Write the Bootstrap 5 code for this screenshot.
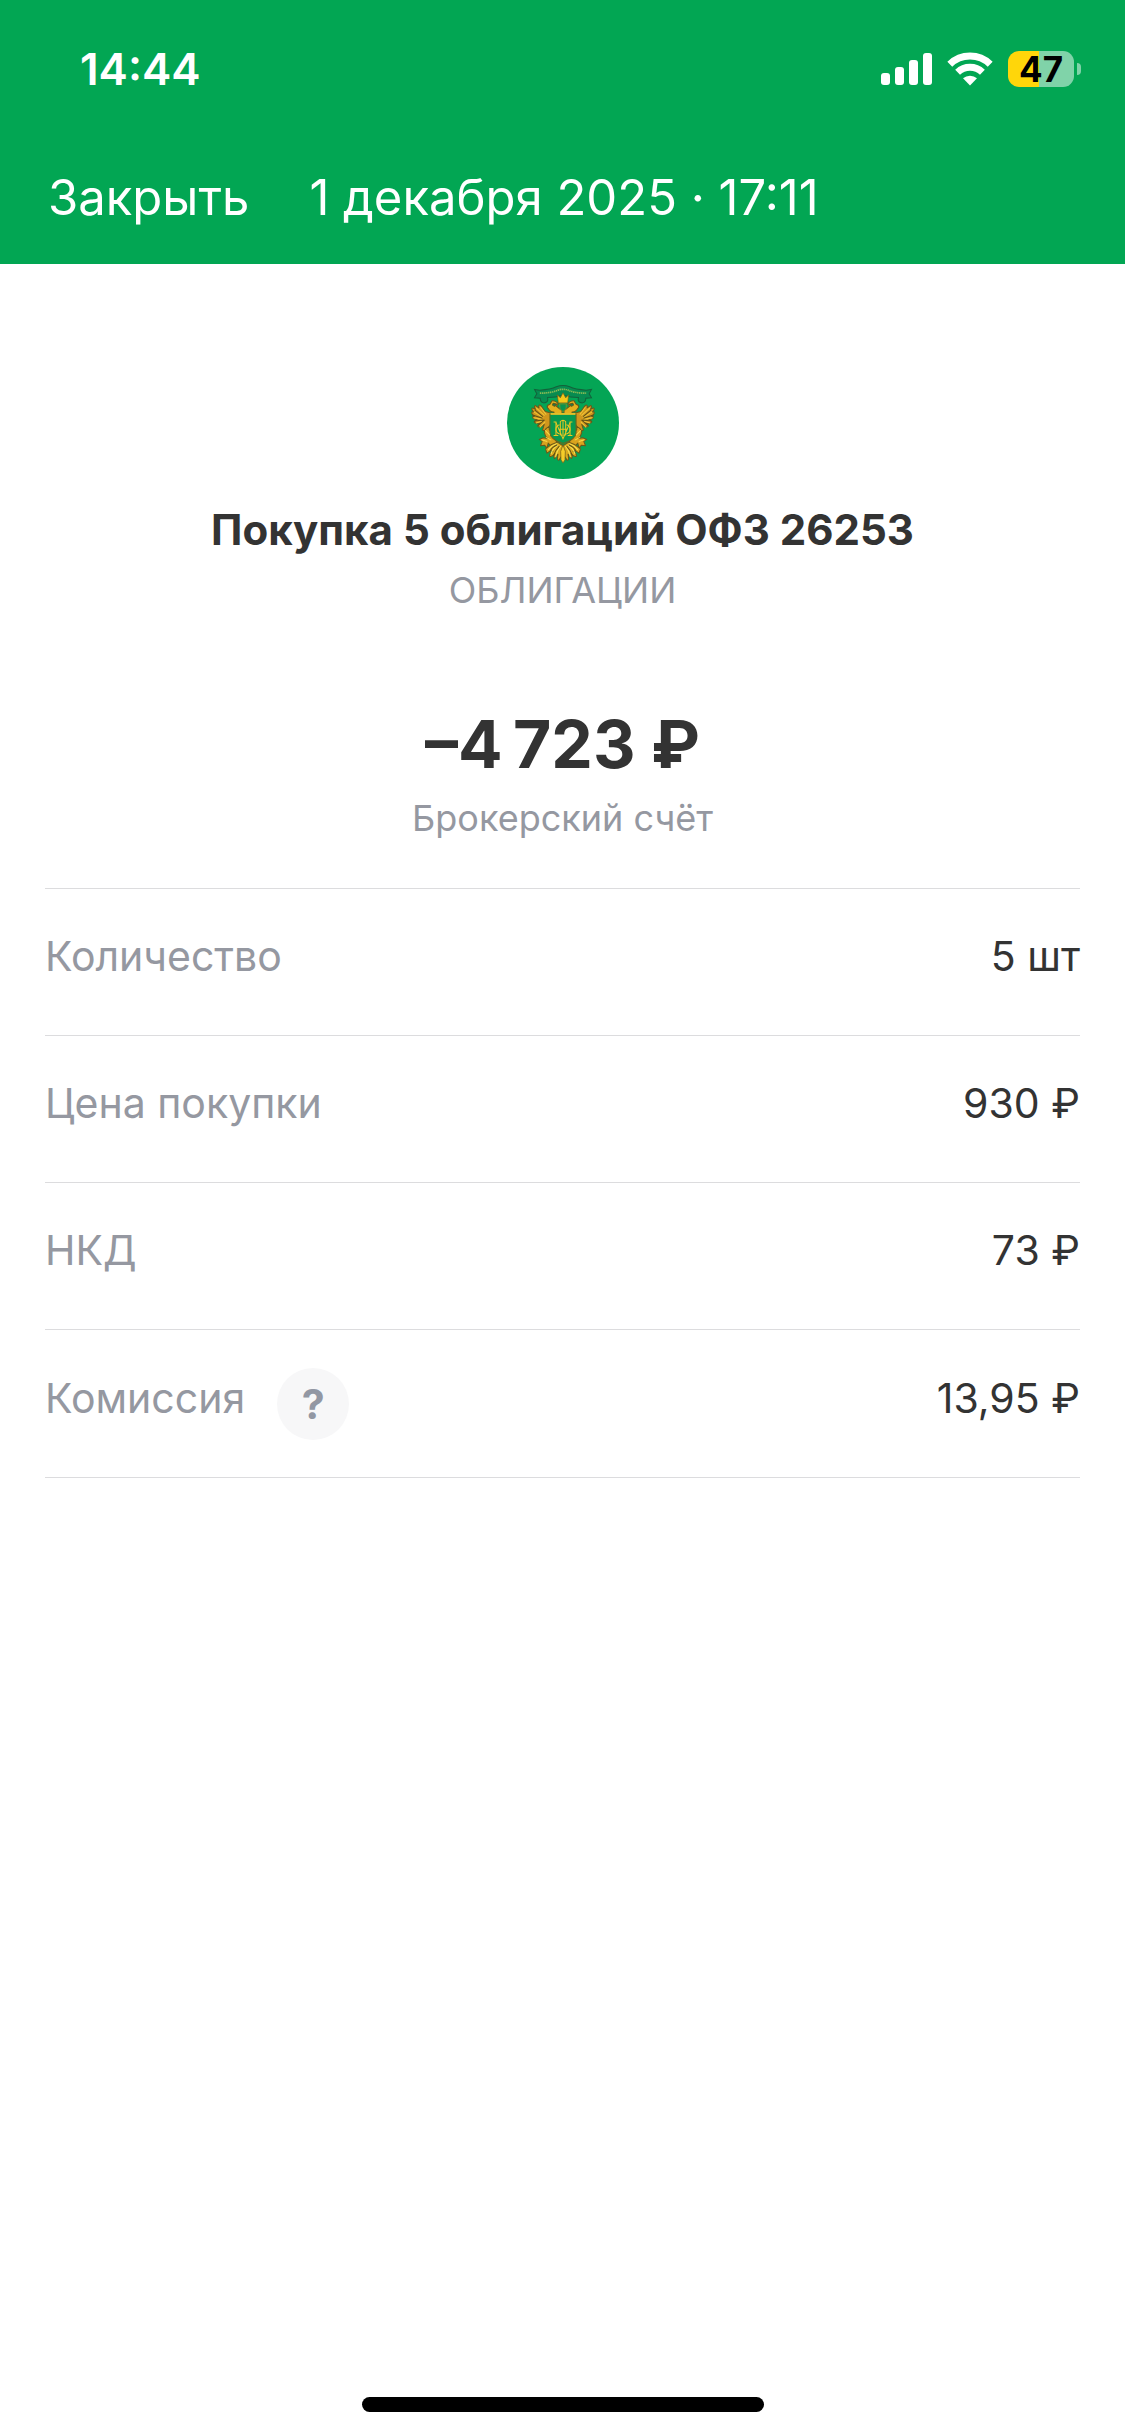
<!DOCTYPE html>
<html lang="ru">
<head>
  <meta charset="UTF-8" />
  <meta name="viewport" content="width=device-width, initial-scale=1" />
  <title>Операция</title>
  <link href="https://cdn.jsdelivr.net/npm/bootstrap@5.3.3/dist/css/bootstrap.min.css" rel="stylesheet">
  <style>
    body {
      font-family: Inter, "Liberation Sans", sans-serif;
      color: #333;
      background: #fff;
    }
    .app-header { background: #02a653; }
    .status-bar {
      padding: 42px 44px 0 80px;
      height: 136px;
    }
    .status-time {
      font-size: 44px;
      line-height: 54px;
      font-weight: 600;
    }
    .status-icons { height: 54px; gap: 15px; }
    .battery-level {
      width: 66px;
      height: 36px;
      border-radius: 11px;
      background: linear-gradient(90deg, #ffd60a 47%, #80d3a9 47%);
      color: #000;
      font-size: 35px;
      line-height: 36px;
      font-weight: 700;
    }
    .battery-tip {
      width: 4px;
      height: 12px;
      margin-left: 3px;
      border-radius: 0 6px 6px 0;
      background: #80d3a9;
    }
    .title-bar {
      gap: 60px;
      height: 128px;
      padding: 0 48px 4px;
      font-size: 49px;
      line-height: 60px;
    }
    .btn-close-text {
      font-size: 49px;
      line-height: 60px;
      color: #fff;
    }
    .deal { padding: 103px 45px 0; }
    .deal-name {
      font-size: 42px;
      line-height: 52px;
      font-weight: 700;
      margin-top: 25px;
    }
    .deal-note {
      font-size: 36px;
      line-height: 44px;
      margin-top: 12px;
      color: #9598a1;
    }
    .deal-sum {
      font-size: 66px;
      line-height: 80px;
      font-weight: 700;
      margin-top: 92px;
    }
    .deal-rows { padding: 48px 45px 0; }
    .deal-row {
      height: 147px;
      padding: 0 0 12px;
      font-size: 41px;
      line-height: 52px;
      border-top: 1px solid #dcdcde;
    }
    .deal-row:last-child {
      height: 149px;
      border-bottom: 1px solid #dcdcde;
    }
    .deal-row dt { color: #9598a1; gap: 32px; }
    .btn-help {
      width: 72px;
      height: 72px;
      margin-top: 12px;
      background: #f7f7f8;
      color: #9297a3;
      font-size: 41px;
      line-height: 72px;
      font-weight: 700;
    }
    .home-bar {
      width: 402px;
      height: 15px;
      margin-bottom: 24px;
    }
  </style>
</head>
<body class="d-flex flex-column min-vh-100">

  <header class="app-header text-white">
    <div class="status-bar d-flex justify-content-between align-items-start">
      <div class="status-time">14:44</div>
      <div class="status-icons d-flex align-items-center">
        <svg width="51" height="32" viewBox="0 0 51 32" fill="#fff" aria-hidden="true">
          <rect x="0" y="20" width="9" height="12" rx="3"/>
          <rect x="14" y="14" width="9" height="18" rx="3"/>
          <rect x="28" y="7" width="9" height="25" rx="3"/>
          <rect x="42" y="0" width="9" height="32" rx="3"/>
        </svg>
        <svg width="46" height="34" viewBox="0 0 46 34" aria-hidden="true">
          <g fill="none" stroke="#fff" stroke-width="7">
            <path d="M2.8 12.2a29 29 0 0 1 40.4 0"/>
            <path d="M10.6 20.2a18 18 0 0 1 24.8 0"/>
          </g>
          <path d="M23 33.5l-7-7.2a10.5 10.5 0 0 1 14 0z" fill="#fff"/>
        </svg>
        <div class="d-flex align-items-center">
          <div class="battery-level text-center">47</div>
          <div class="battery-tip"></div>
        </div>
      </div>
    </div>
    <div class="title-bar d-flex align-items-center">
      <button type="button" class="btn-close-text btn p-0 border-0">Закрыть</button>
      <div>1 декабря 2025 · 17:11</div>
    </div>
  </header>

  <main class="flex-grow-1">
    <section class="deal d-flex flex-column align-items-center text-center">
      <svg width="112" height="112" viewBox="52 50 334 334" aria-hidden="true">
        <circle cx="219" cy="217" r="167" fill="#04a555"/>
        <!-- ribbon -->
        <path d="M134 117l16 2q33-2 49-10 20-7 40 0 16 8 49 10l16-2-7 13 7 12-17 1q0 12-10 14-16 0-12-16-25 0-46-7-21 7-46 7 4 16-12 16-10-2-10-14l-17-1 7-12z" fill="#078c50" stroke="#14613a" stroke-width="3"/>
        <path d="M150 128q34 0 54-9 15-5 30 0 20 9 54 9" fill="none" stroke="#8dbb55" stroke-width="5" stroke-dasharray="4 2"/>
        <!-- crown -->
        <path d="M202 133l9 9 8-15 8 15 9-9-3 24h-28z" fill="#f2c81b" stroke="#715c17" stroke-width="2"/>
        <!-- wings, left one mirrored to the right -->
        <g id="wing" stroke="#69571a" stroke-width="3" stroke-linejoin="round">
          <path d="M192 184q-12 1-17-10l-3-4q-1-7 8-9l6-10q13-1 19 10l-6 6q8 7 17 13v9h-24z" fill="#e5b01d"/>
          <path d="M190 158l12 3-8 6q-10-2-4-9z" fill="#17804a"/>
          <path d="M194 190l-28-7-13-18q-8-5-6 7l-10-7q-6 1 0 11l-9-4q-5 3 3 12l-5 0q-2 7 8 12l-6 3q2 8 14 8l-9 6q4 8 18 3l-8 10q7 8 20-5l-5 17 9 4 12-17 9-14z" fill="#d0961d"/>
          <path d="M139 172l25 23M132 184l28 17M131 201l27 5M138 217l22-6M150 230l16-17M152 170l17 22" fill="none" stroke="#f0c636"/>
          <path d="M135 178l24 20M128 193l30 10M134 211l27-3M144 225l20-17" fill="none" stroke="#5f5017"/>
          <path d="M178 228q-13 4-15 17 3 13 10 18l-13-2-12 5 9 6-5 13 12-2 7 9 4-15 10 12 17-14-13-14-2-18-9-6z" fill="#d9a31e"/>
          <path d="M166 239l14 14M168 260l16 8M155 267l17 5" fill="none" stroke="#f9db4b"/>
          <path d="M218 284l-16-10-19 8-16 12 4 13q12-10 18-6-10 4-10 15 9 3 16-9-6 11-1 16l10-13-2 14q4 9 8-1l8-12z" fill="#dcac1d"/>
          <path d="M212 286q-12 14-15 33M205 282q-16 9-22 28M201 279q-15 4-26 18" fill="none" stroke="#fae255"/>
          <path d="M208 286q-12 12-17 28M202 282q-15 6-22 19" fill="none" stroke="#5f5017"/>
        </g>
        <use href="#wing" transform="matrix(-1 0 0 1 438 0)"/>
        <path d="M219 282l-7 20 1 25 6 9 6-9 1-25z" fill="#f5cd29" stroke="#69571a" stroke-width="2"/>
        <!-- shield -->
        <path d="M180 190h78v56q0 19-39 32-39-13-39-32z" fill="#08994f" stroke="#6d651d" stroke-width="3"/>
        <path d="M182 190h74" stroke="#f2cc2b" stroke-width="5"/>
        <path d="M209 160h20l-1 15-9 8-9-8z" fill="#0a934e" stroke="#9e8c22" stroke-width="2"/>
        <!-- monogram -->
        <g fill="none" stroke="#edc722" stroke-width="3">
          <path d="M191 214h7v40m-7 0h14M247 214h-7v40m7 0h-14"/>
          <path d="M198 216l21 48 21-48M211 254v-41q8-8 16 0v41M219 208v48M205 236h28"/>
          <path d="M209 222q-11 3-11 14t11 14M229 222q11 3 11 14t-11 14"/>
        </g>
      </svg>
      <h1 class="deal-name mb-0">Покупка 5 облигаций ОФЗ 26253</h1>
      <div class="deal-note">ОБЛИГАЦИИ</div>
      <div class="deal-sum">–4&thinsp;723 ₽</div>
      <div class="deal-note">Брокерский счёт</div>
    </section>

    <dl class="deal-rows mb-0">
      <div class="deal-row d-flex justify-content-between align-items-center">
        <dt class="fw-normal">Количество</dt>
        <dd class="mb-0">5 шт</dd>
      </div>
      <div class="deal-row d-flex justify-content-between align-items-center">
        <dt class="fw-normal">Цена покупки</dt>
        <dd class="mb-0">930 ₽</dd>
      </div>
      <div class="deal-row d-flex justify-content-between align-items-center">
        <dt class="fw-normal">НКД</dt>
        <dd class="mb-0">73 ₽</dd>
      </div>
      <div class="deal-row d-flex justify-content-between align-items-center">
        <dt class="fw-normal d-flex align-items-center">
          Комиссия
          <button type="button" class="btn-help btn rounded-circle border-0 p-0" aria-label="О комиссии">?</button>
        </dt>
        <dd class="mb-0">13,95 ₽</dd>
      </div>
    </dl>
  </main>

  <div class="home-bar bg-black rounded-pill mx-auto"></div>

  <script src="https://cdn.jsdelivr.net/npm/bootstrap@5.3.3/dist/js/bootstrap.bundle.min.js"></script>
</body>
</html>
